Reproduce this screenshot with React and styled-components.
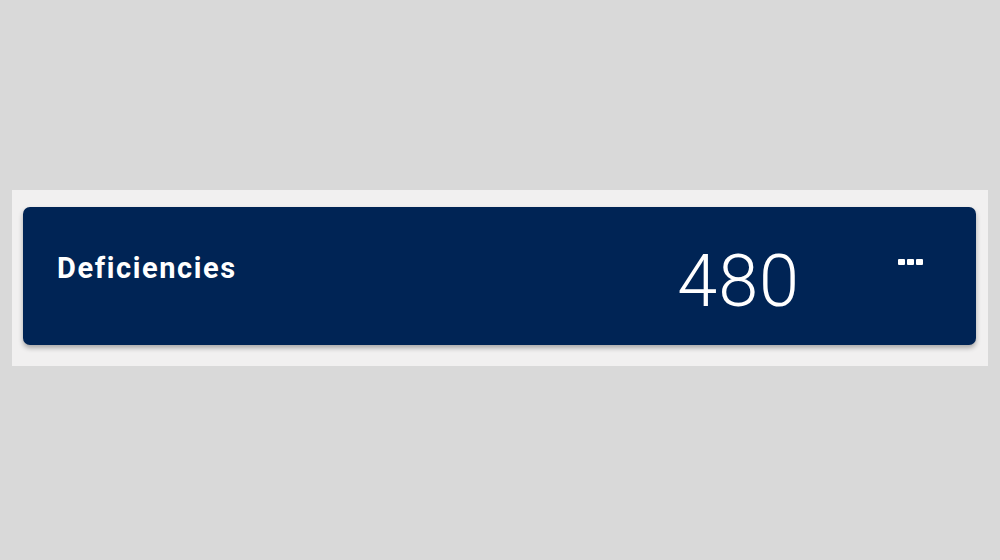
import React from "react";
import styled, { createGlobalStyle } from "styled-components";

const GlobalStyle = createGlobalStyle`
  html, body {
    margin: 0;
    padding: 0;
    background: #d9d9d9;
    font-family: Roboto, "Liberation Sans", sans-serif;
  }
`;

export default function App() {
  return (
    <>
      <GlobalStyle />
      <Page>
        <Panel>
          <Card>
            <Title>Deficiencies</Title>
            <Count>480</Count>
            <MoreButton aria-label="More">
              <Dot />
              <Dot />
              <Dot />
            </MoreButton>
          </Card>
        </Panel>
      </Page>
    </>
  );
}

const Page = styled.div`
  width: 1000px;
  height: 560px;
  padding: 190px 12px 0 12px;
  box-sizing: border-box;
`;

const Panel = styled.div`
  background: #f1f0f0;
  padding: 17px 12px 21px 11px;
`;

const Card = styled.div`
  height: 138px;
  background: #002455;
  border-radius: 7px;
  box-shadow: 0 3px 5px rgba(0, 0, 0, 0.3);
  display: flex;
  align-items: flex-start;
  padding: 0 53px 0 34px;
  box-sizing: border-box;
  color: #fff;
`;

const Title = styled.div`
  flex: 1;
  font-weight: 700;
  font-size: 29px;
  letter-spacing: 1.6px;
  line-height: 1;
  margin-top: 47px;
`;

const Count = styled.div`
  font-weight: 300;
  font-size: 72px;
  letter-spacing: 1px;
  line-height: 1;
  margin-top: 39px;
  margin-right: 98px;
`;

const MoreButton = styled.div`
  display: flex;
  gap: 2px;
  margin-top: 52px;
`;

const Dot = styled.span`
  width: 7px;
  height: 6px;
  background: #fff;
  border-radius: 1px;
`;
